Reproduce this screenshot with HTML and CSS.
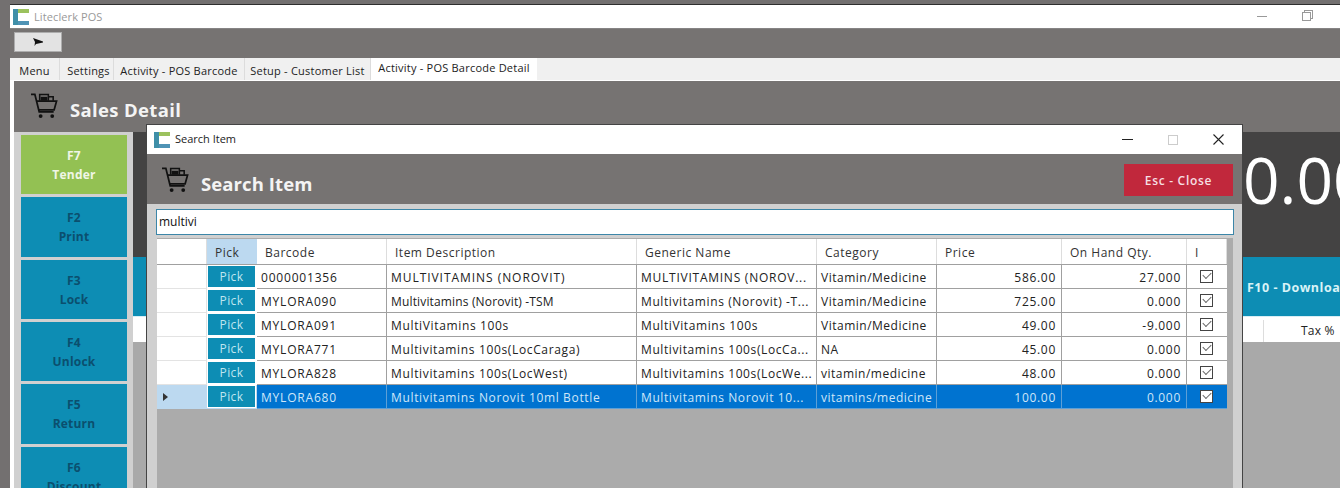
FILE: index.html
```html
<!DOCTYPE html>
<html lang="en">
<head>
<meta charset="utf-8">
<title>Liteclerk POS</title>
<link rel="stylesheet" href="styles.css">
</head>
<body>
<svg class="defs" width="0" height="0" aria-hidden="true">
  <symbol id="logo" viewBox="0 0 16 16">
    <rect x="0" y="0" width="5" height="16" fill="#3f8fa8"/>
    <rect x="5" y="0" width="11" height="4" fill="#9cc25e"/>
    <rect x="5" y="12" width="11" height="4" fill="#4f93b5"/>
  </symbol>
  <symbol id="cart" viewBox="0 0 30 28">
    <path d="M1 2.5h4l4.5 18h15" fill="none" stroke="#111" stroke-width="1.8"/>
    <path d="M6.5 9.5h21l-2.5 9H9" fill="none" stroke="#111" stroke-width="1.8"/>
    <path d="M10 9V2.5h9V9M19 5h5v4" fill="none" stroke="#111" stroke-width="1.6"/>
    <rect x="11" y="5" width="7" height="4" fill="#111"/>
    <circle cx="11" cy="25" r="2" fill="#111"/>
    <circle cx="23" cy="25" r="2" fill="#111"/>
  </symbol>
</svg>
<div class="window">
  <div class="titlebar">
    <svg class="logo"><use href="#logo"/></svg>
    <span class="app-title">Liteclerk POS</span>
    <span class="win-min"></span>
    <span class="win-restore"></span>
  </div>
  <div class="toolbar">
    <button class="arrow-btn"><svg class="arrow" viewBox="0 0 10 8"><path d="M0 0l10 3.6v.8L3 6 1.5 8 2 4z" fill="#111"/></svg></button>
  </div>
  <div class="tabs">
    <span class="tab t1">Menu</span>
    <span class="tab t2">Settings</span>
    <span class="tab t3">Activity - POS Barcode</span>
    <span class="tab t4">Setup - Customer List</span>
    <span class="tab active">Activity - POS Barcode Detail</span>
  </div>
  <div class="page">
    <div class="page-head">
      <svg class="cart"><use href="#cart"/></svg>
      <span class="page-title">Sales Detail</span>
    </div>
    <div class="page-body">
      <div class="side">
        <div class="fkey green">F7<br>Tender</div>
        <div class="fkey">F2<br>Print</div>
        <div class="fkey">F3<br>Lock</div>
        <div class="fkey">F4<br>Unlock</div>
        <div class="fkey">F5<br>Return</div>
        <div class="fkey">F6<br>Discount</div>
      </div>
      <div class="main">
        <div class="total"><span class="total-num">0.00</span></div>
        <div class="actions"><span class="download">F10 - Download</span></div>
        <div class="lines"><span class="tax">Tax %</span></div>
      </div>
    </div>
  </div>
</div>

<section class="modal">
  <div class="m-title">
    <svg class="m-logo"><use href="#logo"/></svg>
    <span class="m-title-text">Search Item</span>
    <span class="m-min"></span>
    <span class="m-max"></span>
    <svg class="m-close" viewBox="0 0 11 11"><path d="M.5.5l10 10M10.5.5l-10 10" stroke="#222" stroke-width="1.1" fill="none"/></svg>
  </div>
  <div class="m-head">
    <svg class="m-cart"><use href="#cart"/></svg>
    <span class="m-heading">Search Item</span>
    <button class="esc">Esc - Close</button>
  </div>
  <div class="m-body">
    <div class="search">multivi</div>
    <div class="grid-wrap">
      <div class="grid">
        <div class="row head">
          <div class="c c0"></div>
          <div class="c c1 pick-head">Pick</div>
          <div class="c c2">Barcode</div>
          <div class="c c3">Item Description</div>
          <div class="c c4">Generic Name</div>
          <div class="c c5">Category</div>
          <div class="c c6">Price</div>
          <div class="c c7">On Hand Qty.</div>
          <div class="c c8">I</div>
        </div>
        <div class="row">
          <div class="c c0"></div><div class="c c1"><span class="pick">Pick</span></div>
          <div class="c c2">0000001356</div><div class="c c3 caps">MULTIVITAMINS (NOROVIT)</div>
          <div class="c c4 caps">MULTIVITAMINS (NOROV...</div><div class="c c5">Vitamin/Medicine</div>
          <div class="c c6 num">586.00</div><div class="c c7 num">27.000</div>
          <div class="c c8"><span class="chk"></span></div>
        </div>
        <div class="row">
          <div class="c c0"></div><div class="c c1"><span class="pick">Pick</span></div>
          <div class="c c2">MYLORA090</div><div class="c c3 tight">Multivitamins (Norovit) -TSM</div>
          <div class="c c4">Multivitamins (Norovit) -T...</div><div class="c c5">Vitamin/Medicine</div>
          <div class="c c6 num">725.00</div><div class="c c7 num">0.000</div>
          <div class="c c8"><span class="chk"></span></div>
        </div>
        <div class="row">
          <div class="c c0"></div><div class="c c1"><span class="pick">Pick</span></div>
          <div class="c c2">MYLORA091</div><div class="c c3">MultiVitamins 100s</div>
          <div class="c c4">MultiVitamins 100s</div><div class="c c5">Vitamin/Medicine</div>
          <div class="c c6 num">49.00</div><div class="c c7 num">-9.000</div>
          <div class="c c8"><span class="chk"></span></div>
        </div>
        <div class="row">
          <div class="c c0"></div><div class="c c1"><span class="pick">Pick</span></div>
          <div class="c c2">MYLORA771</div><div class="c c3">Multivitamins 100s(LocCaraga)</div>
          <div class="c c4">Multivitamins 100s(LocCa...</div><div class="c c5">NA</div>
          <div class="c c6 num">45.00</div><div class="c c7 num">0.000</div>
          <div class="c c8"><span class="chk"></span></div>
        </div>
        <div class="row">
          <div class="c c0"></div><div class="c c1"><span class="pick">Pick</span></div>
          <div class="c c2">MYLORA828</div><div class="c c3">Multivitamins 100s(LocWest)</div>
          <div class="c c4">Multivitamins 100s(LocWe...</div><div class="c c5">vitamin/medicine</div>
          <div class="c c6 num">48.00</div><div class="c c7 num">0.000</div>
          <div class="c c8"><span class="chk"></span></div>
        </div>
        <div class="row selected">
          <div class="c c0"><span class="caret"></span></div><div class="c c1"><span class="pick">Pick</span></div>
          <div class="c c2">MYLORA680</div><div class="c c3">Multivitamins Norovit 10ml Bottle</div>
          <div class="c c4">Multivitamins Norovit 10...</div><div class="c c5">vitamins/medicine</div>
          <div class="c c6 num">100.00</div><div class="c c7 num">0.000</div>
          <div class="c c8"><span class="chk"></span></div>
        </div>
      </div>
    </div>
  </div>
</section>
</body>
</html>
```
FILE: styles.css
```css
* { box-sizing: border-box; }
html, body { margin: 0; height: 488px; overflow: hidden; }
body {
  position: relative;
  width: 1340px;
  background: #737070;
  font-family: "Open Sans", "Noto Sans", sans-serif;
  font-size: 12px;
  color: #222;
  padding: 4px 0 0 10px;
}
.defs { position: absolute; }
.window {
  height: 484px;
  border-top: 1px solid #2e2e2e;
  background: #fff;
  display: flex;
  flex-direction: column;
}
.titlebar {
  height: 23px;
  flex: none;
  display: flex;
  align-items: center;
  background: #fff;
  padding-left: 3px;
}
.logo { width: 16px; height: 16px; margin-right: 5px; }
.app-title { color: #999; font-size: 11px; letter-spacing: .1px; }
.win-min { width: 10px; height: 1px; background: #999; margin-left: auto; margin-right: 35px; }
.win-restore {
  width: 9px; height: 9px; border: 1px solid #999; margin-right: 29px;
  box-shadow: 2px -2px 0 -1px #fff, 2px -2px 0 0 #999;
}
.toolbar {
  height: 30px;
  flex: none;
  background: #767372;
  display: flex;
  align-items: center;
  padding: 0 4px 3px;
  border-top: 1px solid #868484;
}
.arrow-btn {
  width: 48px; height: 20px; padding: 0;
  background: #e3e3e3; border: 1px solid #adadad;
  display: flex; align-items: center; justify-content: center;
}
.arrow { width: 10px; height: 8px; }
.tabs {
  height: 23px;
  flex: none;
  background: #f0f0f0;
  display: flex;
  align-items: stretch;
  padding: 0 0 0 3px;
  border-bottom: 1px solid #fff;
}
.tab {
  padding-top: 5px;
  border-right: 1px solid #dcdcdc;
  color: #222;
  white-space: nowrap;
  text-align: center;
  font-size: 11px;
  letter-spacing: .22px;
}
.t1 { width: 47px; padding-right: 3px; }
.t2 { width: 54px; padding-left: 4px; }
.t3 { width: 131px; }
.t4 { width: 126px; }
.tab.active {
  width: 166px;
  background: #fff;
  padding-top: 2px;
  border: 0;
}
.page {
  flex: 1;
  min-height: 0;
  margin-left: 4px;
  background: #767372;
  display: flex;
  flex-direction: column;
}
.page-head {
  height: 51px;
  flex: none;
  display: flex;
  align-items: center;
  padding: 5px 0 0 16px;
}
.cart { width: 29px; height: 27px; margin-top: -8px; }
.page-title { font-size: 18.5px; font-weight: 700; color: #f4f4f4; margin-left: 11px; letter-spacing: .35px; }
.page-body { flex: 1; display: flex; min-height: 0; }
.side {
  width: 119px;
  flex: none;
  background: #d0d0d0;
  padding: 3px 6px 0 7px;
  display: flex;
  flex-direction: column;
  gap: 3px;
  overflow: hidden;
}
.fkey {
  height: 59.33px;
  flex: none;
  background: #0d8db4;
  color: #0b4f6e;
  text-align: center;
  font-weight: 700;
  font-size: 12px;
  line-height: 19px;
  padding-top: 11px;
  letter-spacing: .2px;
}
.fkey.green { background: #93c153; color: #f0f6e6; }
.main {
  flex: 1;
  min-width: 0;
  background: #a9a9a9;
  display: flex;
  flex-direction: column;
  overflow: hidden;
}
.total {
  height: 125px;
  flex: none;
  background: #444343;
  padding: 10px 0 0 1110px;
}
.total-num {
  display: block;
  color: #fff;
  font-size: 64px;
  line-height: 76px;
  font-weight: 500;
  white-space: nowrap;
}
.actions {
  height: 59px;
  flex: none;
  background: #0d8db4;
  padding: 22px 0 0 1114px;
  color: #d8f3f7;
  font-weight: 700;
  font-size: 12.5px;
  letter-spacing: .5px;
  white-space: nowrap;
}
.lines {
  height: 26px;
  flex: none;
  background: #fff;
  border-top: 1px solid #d8eef5;
  padding: 3px 0 0 1130px;
}
.tax { display: block; border-left: 1px solid #ddd; padding: 2px 0 0 37px; height: 22px; white-space: nowrap; letter-spacing: .2px; }

.modal {
  position: absolute;
  left: 146px;
  top: 124px;
  width: 1097px;
  height: 364px;
  background: #d0d0d0;
  display: flex;
  flex-direction: column;
  border-left: 1px solid #444;
  border-right: 1px solid #444;
  border-top: 1px solid #444;
}
.m-title {
  height: 29px;
  flex: none;
  background: #fff;
  display: flex;
  align-items: center;
  padding-left: 7px;
}
.m-logo { width: 16px; height: 16px; margin-right: 5px; }
.m-title-text { font-size: 11px; margin-top: -3px; }
.m-min { width: 11px; height: 1px; background: #222; margin-left: auto; margin-right: 35px; }
.m-max { width: 10px; height: 10px; border: 1px solid #ccc; margin-right: 35px; }
.m-close { width: 11px; height: 11px; margin-right: 18px; }
.m-head {
  height: 50px;
  flex: none;
  background: #767372;
  display: flex;
  align-items: center;
  padding: 0 9px 0 14px;
}
.m-cart { width: 29px; height: 27px; }
.m-heading { font-size: 18.5px; font-weight: 700; color: #f4f4f4; margin-left: 11px; margin-top: 8px; letter-spacing: .1px; }
.esc {
  margin-left: auto;
  margin-top: 2px;
  width: 109px; height: 32px;
  background: #c1283c; border: 0;
  color: #f6dfe2;
  font: 600 12px "Open Sans", sans-serif;
  letter-spacing: .7px;
}
.m-body {
  flex: 1;
  min-height: 0;
  padding: 5px 8px 0 9px;
  display: flex;
  flex-direction: column;
}
.search {
  height: 26px;
  flex: none;
  background: #fff;
  border: 1px solid #3c86a8;
  padding: 3px 0 0 2px;
  font-size: 12px;
  color: #111;
}
.grid-wrap {
  flex: 1;
  margin: 3px 1px 0 1px;
  background: #ababab;
  padding-top: 1px;
  overflow: hidden;
}
.grid { width: 1070px; }
.row { display: flex; height: 24px; background: #fff; }
.row.head { height: 26px; border-bottom: 1px solid #a0a0a0; }
.c {
  flex: none;
  height: 100%;
  border-right: 1px solid #a0a0a0;
  border-bottom: 1px solid #a0a0a0;
  padding: 4px 4px 0 4px;
  white-space: nowrap;
  overflow: hidden;
  color: #222;
  letter-spacing: .5px;
}
.c0 { width: 50px; border-color: #e3e3e3; padding: 0; display: flex; align-items: center; }
.c1 { width: 50px; padding: 0 1px 1px 0; border: 0; }
.c2 { width: 130px; letter-spacing: .8px; }
.c3 { width: 250px; letter-spacing: .65px; }
.c4 { width: 180px; letter-spacing: .6px; }
.c5 { width: 120px; letter-spacing: .5px; }
.c6 { width: 125px; }
.c7 { width: 125px; }
.c8 { width: 40px; border-right: 0; display: flex; justify-content: center; align-items: center; padding: 0 2px 1px 0; }
.caps { letter-spacing: .95px; }
.c4.caps { letter-spacing: .75px; }
.tight { letter-spacing: .15px; }
.num { text-align: right; padding-right: 5px; letter-spacing: .7px; }
.head .c { border: 0; border-right: 1px solid #ddd; padding: 5px 0 0 8px; color: #333; letter-spacing: .5px; display: block; }
.head .c0 { padding: 0; }
.head .pick-head { background: #bcd9f0; border: 0; }
.pick {
  display: block; height: 100%;
  background: #0d8db4; color: #bfe5ef;
  text-align: center; line-height: 22px;
  border: 1px solid #fff;
  letter-spacing: .4px;
}
.chk {
  display: block; position: relative;
  width: 13px; height: 13px;
  border: 1px solid #444; background: #fff;
}
.chk::after {
  content: ""; position: absolute; left: 2px; top: 1.5px;
  width: 7px; height: 4px;
  border-left: 1px solid #666; border-bottom: 1px solid #666;
  transform: rotate(-45deg);
}
.selected { background: #0073d0; }
.selected .c { background: #0073d0; color: #cfe6f8; border-color: #5d9fd6; }
.selected .c0 { background: #bcd9f0; border-color: #bcd9f0; }
.selected .c1 { background: #bcd9f0; }
.caret {
  margin-left: 6px;
  border-left: 5px solid #333;
  border-top: 4.5px solid transparent;
  border-bottom: 4.5px solid transparent;
}
```
